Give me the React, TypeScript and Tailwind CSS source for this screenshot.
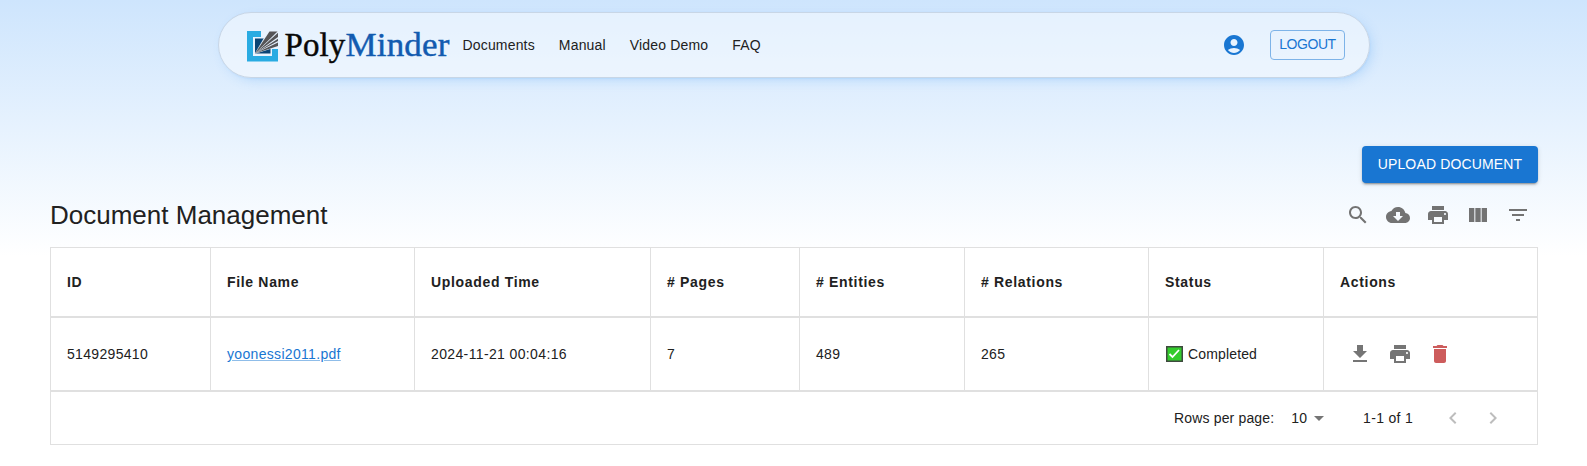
import React from "react";

const icons = {
  search:
    "M15.5 14h-.79l-.28-.27C15.41 12.59 16 11.11 16 9.5 16 5.91 13.09 3 9.5 3S3 5.91 3 9.5 5.91 16 9.5 16c1.61 0 3.09-.59 4.23-1.57l.27.28v.79l5 4.99L20.49 19l-4.99-5zm-6 0C7.01 14 5 11.99 5 9.5S7.01 5 9.5 5 14 7.01 14 9.5 11.99 14 9.5 14z",
  cloud:
    "M19.35 10.04C18.67 6.59 15.64 4 12 4 9.11 4 6.6 5.64 5.35 8.04 2.34 8.36 0 10.91 0 14c0 3.31 2.69 6 6 6h13c2.76 0 5-2.24 5-5 0-2.64-2.05-4.78-4.65-4.96zM17 13l-5 5-5-5h3V9h4v4h3z",
  print:
    "M19 8H5c-1.66 0-3 1.34-3 3v6h4v4h12v-4h4v-6c0-1.66-1.34-3-3-3zm-3 11H8v-5h8v5zm3-7c-.55 0-1-.45-1-1s.45-1 1-1 1 .45 1 1-.45 1-1 1zm-1-9H6v4h12V3z",
  columns:
    "M14.67 5v14H9.33V5h5.34zm1 14H21V5h-5.33v14zm-7.34 0V5H3v14h5.33z",
  filter: "M10 18h4v-2h-4v2zM3 6v2h18V6H3zm3 7h12v-2H6v2z",
  download: "M19 9h-4V3H9v6H5l7 7 7-7zM5 18v2h14v-2H5z",
  trash:
    "M6 19c0 1.1.9 2 2 2h8c1.1 0 2-.9 2-2V7H6v12zM19 4h-3.5l-1-1h-5l-1 1H5v2h14V4z",
  left: "M15.41 16.59 10.83 12l4.58-4.59L14 6l-6 6 6 6 1.41-1.41z",
  right: "M8.59 16.59 13.17 12 8.59 7.41 10 6l6 6-6 6-1.41-1.41z",
  drop: "M7 10l5 5 5-5z",
  account:
    "M12 2C6.48 2 2 6.48 2 12s4.48 10 10 10 10-4.48 10-10S17.52 2 12 2zm0 4c1.93 0 3.5 1.57 3.5 3.5S13.93 13 12 13s-3.5-1.57-3.5-3.5S10.07 6 12 6zm0 14c-2.03 0-4.43-.82-6.14-2.88C7.55 15.8 9.68 15 12 15s4.45.8 6.14 2.12C16.43 19.18 14.03 20 12 20z",
};

function Icon({ name, className = "" }: { name: keyof typeof icons; className?: string }) {
  return (
    <svg viewBox="0 0 24 24" className={`size-6 shrink-0 fill-current ${className}`} aria-hidden="true">
      <path d={icons[name]} />
    </svg>
  );
}

function Logo() {
  return (
    <div className="flex items-center">
      <svg viewBox="0 0 31 31" className="mt-0.5 size-[31px]" aria-hidden="true">
        <path d="M0 0h14v6H6v19h19v-7h6v12.500H0z" fill="#29abe2" />
        <path d="M8 7.500h15.500v15H8z" fill="#0b4475" />
        <path d="M7.500 23 21 0h10v15.500z" fill="#e6f1fd" />
        <path d="M8 22.500 22.500 .5H30.500z" fill="#565557" />
        <path d="M8 22.500 31 1.800V6z" fill="#565557" />
        <path d="M8 22.500 31 7.800V10z" fill="#565557" />
        <path d="M8 22.500 31 11.500V15z" fill="#565557" />
      </svg>
      <svg viewBox="0 0 170 40" className="ml-[5px] h-10 w-[170px]">
        <text x="1.500" y="30.500" fontFamily="'Liberation Serif', serif" fontSize="34" textLength="61" lengthAdjust="spacingAndGlyphs" fill="#080808" stroke="#080808" strokeWidth=".45">
          Poly
        </text>
        <text x="62.500" y="30.500" fontFamily="'Liberation Serif', serif" fontSize="34" textLength="104" lengthAdjust="spacingAndGlyphs" fill="#125bb0" stroke="#125bb0" strokeWidth=".45">
          Minder
        </text>
      </svg>
    </div>
  );
}

const headings = ["ID", "File Name", "Uploaded Time", "# Pages", "# Entities", "# Relations", "Status", "Actions"];
const grid = "grid grid-cols-[159px_204px_236px_149px_165px_184px_175px_1fr]";
const cell = "flex items-center border-l border-[#e0e0e0] pl-4 first:border-l-0";

export default function App() {
  return (
    <div className="h-[466px] overflow-hidden bg-white bg-[linear-gradient(180deg,#cee5fd,#fff)] bg-[length:100%_256px] bg-no-repeat font-['Liberation_Sans',Arial,sans-serif] text-sm tracking-[0.15px] text-[#212121]">
      <header className="mx-auto mt-3 flex h-[66px] w-[1152px] items-center rounded-full border border-[#c8d6e6] bg-white/45 pl-[28px] pr-[24px] shadow-[0_0_1px_rgba(85,166,246,0.1),1px_1.5px_2px_-1px_rgba(85,166,246,0.15),4px_4px_12px_-2.5px_rgba(85,166,246,0.3)]">
        <Logo />
        <nav className="ml-2.5 flex gap-6 tracking-[0.17px]">
          <a>Documents</a>
          <a>Manual</a>
          <a>Video Demo</a>
          <a>FAQ</a>
        </nav>
        <Icon name="account" className="ml-auto text-[#1976d2]" />
        <button className="ml-6 h-[30px] w-[75px] rounded border border-[#7db3e8] pb-0.5 pl-px text-sm tracking-[-0.45px] text-[#1976d2]">
          LOGOUT
        </button>
      </header>
      <main className="ml-[50px] mr-[49px] mt-[68px]">
        <div className="flex justify-end">
          <button className="h-[37px] w-[176px] rounded bg-[#1976d2] pb-0.5 text-sm tracking-[0.15px] text-white shadow-[0_3px_1px_-2px_rgba(0,0,0,0.2),0_2px_2px_0_rgba(0,0,0,0.14),0_1px_5px_0_rgba(0,0,0,0.12)]">
            UPLOAD DOCUMENT
          </button>
        </div>
        <div className="flex h-16 items-center justify-between pr-2">
          <h1 className="pt-0.5 text-[26px] tracking-normal">Document Management</h1>
          <div className="flex gap-4 text-[#737373]">
            <Icon name="search" />
            <Icon name="cloud" />
            <Icon name="print" />
            <Icon name="columns" />
            <Icon name="filter" />
          </div>
        </div>
        <section className="border border-[#e0e0e0] bg-white">
          <div className={`${grid} h-[70px] border-b-2 border-[#e0e0e0] font-bold tracking-[0.67px]`}>
            {headings.map((h) => (
              <div key={h} className={cell}>{h}</div>
            ))}
          </div>
          <div className={`${grid} h-[74px] border-b-2 border-[#e0e0e0] tracking-[0.32px]`}>
            <div className={cell}>5149295410</div>
            <div className={cell}>
              <a className="text-[#1976d2] underline decoration-[#8fbde9]">yoonessi2011.pdf</a>
            </div>
            <div className={`${cell} tracking-[0.37px]`}>2024-11-21 00:04:16</div>
            <div className={cell}>7</div>
            <div className={cell}>489</div>
            <div className={cell}>265</div>
            <div className={`${cell} tracking-[0.15px]`}>
              <svg viewBox="0 0 17 16" className="ml-px mr-[5px] h-4 w-[17px]" aria-hidden="true">
                <path d="M.75.75h15.500v14.500H.75z" fill="#33cc2c" stroke="#3e4a3e" strokeWidth="1.500" />
                <path d="m3.500 8 3 3 6.500-7" fill="none" stroke="white" strokeWidth="1.800" />
              </svg>
              Completed
            </div>
            <div className={`${cell} gap-4`}>
              <Icon name="download" className="ml-2 text-[#757575]" />
              <Icon name="print" className="text-[#757575]" />
              <Icon name="trash" className="text-[#cd5c5c]" />
            </div>
          </div>
          <footer className="flex h-[52px] items-center justify-end pr-8">
            <span>Rows per page:</span>
            <span className="ml-[17px]">10</span>
            <Icon name="drop" className="text-[#757575]" />
            <span className="ml-8 tracking-[0.3px]">1-1 of 1</span>
            <Icon name="left" className="ml-7 text-[#bdbdbd]" />
            <Icon name="right" className="ml-4 text-[#bdbdbd]" />
          </footer>
        </section>
      </main>
    </div>
  );
}
